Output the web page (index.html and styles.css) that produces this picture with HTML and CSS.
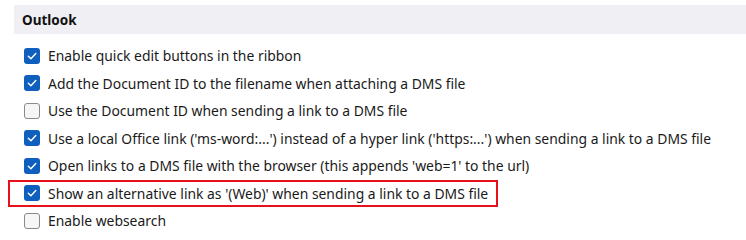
FILE: index.html
```html
<!DOCTYPE html>
<html>
<head>
<meta charset="utf-8">
<link rel="stylesheet" href="styles.css">
</head>
<body>
<div class="panel">
  <div class="header">Outlook</div>
  <ul class="options">
    <li class="row"><span class="box checked"><svg viewBox="0 0 16 16"><path d="M4.3 8.3 L6.9 10.8 L11.8 5.6"/></svg></span><span class="label">Enable quick edit buttons in the ribbon</span></li>
    <li class="row"><span class="box checked"><svg viewBox="0 0 16 16"><path d="M4.3 8.3 L6.9 10.8 L11.8 5.6"/></svg></span><span class="label">Add the Document ID to the filename when attaching a DMS file</span></li>
    <li class="row"><span class="box"></span><span class="label">Use the Document ID when sending a link to a DMS file</span></li>
    <li class="row"><span class="box checked"><svg viewBox="0 0 16 16"><path d="M4.3 8.3 L6.9 10.8 L11.8 5.6"/></svg></span><span class="label">Use a local Office link ('ms-word:...') instead of a hyper link ('https:...') when sending a link to a DMS file</span></li>
    <li class="row"><span class="box checked"><svg viewBox="0 0 16 16"><path d="M4.3 8.3 L6.9 10.8 L11.8 5.6"/></svg></span><span class="label">Open links to a DMS file with the browser (this appends 'web=1' to the url)</span></li>
    <li class="row highlight"><span class="box checked"><svg viewBox="0 0 16 16"><path d="M4.3 8.3 L6.9 10.8 L11.8 5.6"/></svg></span><span class="label">Show an alternative link as '(Web)' when sending a link to a DMS file</span></li>
    <li class="row"><span class="box"></span><span class="label">Enable websearch</span></li>
  </ul>
</div>
</body>
</html>
```

FILE: styles.css
```css
html, body {
  margin: 0;
  padding: 0;
  background: #ffffff;
}
body {
  font-family: "Noto Sans", "Open Sans", sans-serif;
  font-size: 13.9px;
  color: #1a1a1a;
}
.panel {
  padding-top: 5px;
}
.header {
  margin-left: 14px;
  height: 29px;
  padding-left: 8px;
  display: flex;
  align-items: center;
  background: #efeff4;
  font-weight: 700;
  font-size: 13.5px;
  color: #111111;
}
.options {
  list-style: none;
  margin: 8px 0 0 0;
  padding: 0 0 0 24px;
}
.row {
  height: 27.5px;
  display: flex;
  align-items: center;
  gap: 8px;
  width: fit-content;
}
.box {
  width: 16px;
  height: 16px;
  box-sizing: border-box;
  border-radius: 3px;
  border: 1px solid #8a8a8a;
  background: #f6f6f6;
  flex: none;
  display: flex;
}
.box.checked {
  border: none;
  background: #0f5fbf;
}
.box svg {
  width: 16px;
  height: 16px;
}
.box path {
  fill: none;
  stroke: #ffffff;
  stroke-width: 1.4;
  stroke-linecap: round;
  stroke-linejoin: round;
}
.label {
  white-space: nowrap;
}
.highlight {
  position: relative;
}
.highlight::after {
  content: "";
  position: absolute;
  left: -16px;
  right: -10px;
  top: 0;
  bottom: 0;
  border: 2px solid #e8101a;
}
```
